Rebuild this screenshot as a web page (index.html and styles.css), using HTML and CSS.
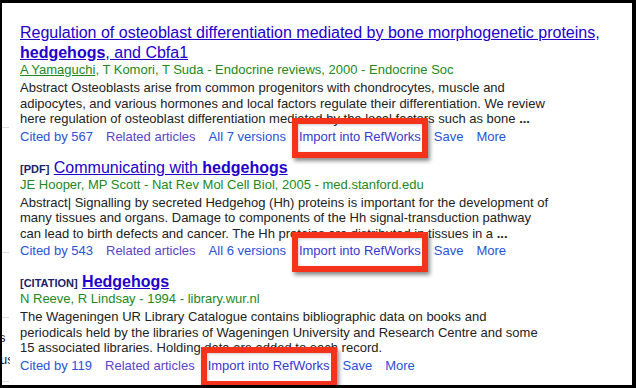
FILE: index.html
```html
<!DOCTYPE html>
<html lang="en">
<head>
    <meta charset="UTF-8">
    <title>Scholar results - hedgehogs</title>
    <link rel="stylesheet" href="styles.css">
</head>
<body>
    <div class="frame">
        <!-- cut-off left column -->
        <aside class="strip">
            <div class="rule rule-1"></div>
            <div class="rule rule-2"></div>
            <div class="rule rule-3"></div>
            <div class="stub stub-1">s</div>
            <div class="stub stub-2">us</div>
            <div class="rule rule-4"></div>
        </aside>

        <main class="results">
            <div class="result">
                <h3 class="title"><a href="#">Regulation of osteoblast differentiation mediated by bone morphogenetic proteins, <b>hedgehogs</b>, and Cbfa1</a></h3>
                <div class="meta"><a href="#">A Yamaguchi</a>, T Komori, T Suda - Endocrine reviews, 2000 - Endocrine Soc</div>
                <div class="snippet">Abstract Osteoblasts arise from common progenitors with chondrocytes, muscle and<br>adipocytes, and various hormones and local factors regulate their differentiation. We review<br>here regulation of osteoblast differentiation mediated by the local factors such as bone <b>...</b></div>
                <div class="links">
                    <a href="#">Cited by 567</a>
                    <a href="#" class="seen">Related articles</a>
                    <a href="#">All 7 versions</a>
                    <span class="marked"><a href="#">Import into RefWorks</a></span>
                    <a href="#">Save</a>
                    <a href="#">More</a>
                </div>
            </div>

            <div class="result">
                <h3 class="title"><span class="tag">[PDF]</span> <a href="#">Communicating with <b>hedgehogs</b></a></h3>
                <div class="meta">JE Hooper, MP Scott - Nat Rev Mol Cell Biol, 2005 - med.stanford.edu</div>
                <div class="snippet">Abstract| Signalling by secreted Hedgehog (Hh) proteins is important for the development of<br>many tissues and organs. Damage to components of the Hh signal-transduction pathway<br>can lead to birth defects and cancer. The Hh proteins are distributed in tissues in a <b>...</b></div>
                <div class="links">
                    <a href="#">Cited by 543</a>
                    <a href="#" class="seen">Related articles</a>
                    <a href="#">All 6 versions</a>
                    <span class="marked"><a href="#">Import into RefWorks</a></span>
                    <a href="#">Save</a>
                    <a href="#">More</a>
                </div>
            </div>

            <div class="result">
                <h3 class="title"><span class="tag">[CITATION]</span> <a href="#"><b>Hedgehogs</b></a></h3>
                <div class="meta">N Reeve, R Lindsay - 1994 - library.wur.nl</div>
                <div class="snippet">The Wageningen UR Library Catalogue contains bibliographic data on books and<br>periodicals held by the libraries of Wageningen University and Research Centre and some<br>15 associated libraries. Holding data are added to each record.</div>
                <div class="links">
                    <a href="#">Cited by 119</a>
                    <a href="#" class="seen">Related articles</a>
                    <span class="marked"><a href="#">Import into RefWorks</a></span>
                    <a href="#">Save</a>
                    <a href="#">More</a>
                </div>
            </div>
        </main>
    </div>
</body>
</html>
```

FILE: styles.css
```css
body {
    margin: 0;
    padding: 0;
    font-family: Arial, "Liberation Sans", sans-serif;
    background: #fff;
}
.frame {
    display: flex;
    box-sizing: border-box;
    height: 388px;
    border-style: solid;
    border-color: #000;
    border-width: 3px 4px 3px 2px;
    overflow: hidden;
}
.strip {
    width: 8px;
    flex: none;
    display: flex;
    flex-direction: column;
    overflow: hidden;
}
.rule {
    height: 1px;
    width: 7px;
    background: #ddd;
}
.rule-1 { margin-top: 124px; }
.rule-2 { margin-top: 124px; }
.rule-3 { margin-top: 64px; }
.rule-4 { margin-top: 13px; }
.stub {
    font-size: 13px;
    line-height: 16px;
    color: #222;
    white-space: nowrap;
}
.stub-1 { margin-top: 12px; text-indent: -3px; }
.stub-2 { margin-top: 6px; text-indent: -2px; }
.results {
    flex: 1;
    padding: 20px 0 0 10px;
}
.result {
    margin-bottom: 13px;
}
.title {
    margin: 0;
    font-size: 16px;
    line-height: 20px;
    font-weight: normal;
}
.title a {
    color: #2200cc;
}
.tag {
    font-size: 11px;
    line-height: 10px;
    font-weight: bold;
    color: #1c2266;
}
.meta {
    margin-top: -1px;
    font-size: 13px;
    line-height: 16px;
    color: #228822;
}
.meta a {
    color: #228822;
}
.snippet {
    margin-top: 2px;
    font-size: 13px;
    line-height: 15.5px;
    color: #222;
}
.links {
    margin-top: 2px;
    display: flex;
    gap: 13px;
    font-size: 13px;
    line-height: 16px;
}
.links a {
    color: #2a52d6;
    text-decoration: none;
}
.links a.seen {
    color: #5b44c8;
}
.marked {
    position: relative;
}
.marked a {
    color: #3838d0;
}
/* red annotation box drawn over the text */
.marked::after {
    content: "";
    position: absolute;
    top: -11px;
    bottom: -13px;
    left: -7px;
    right: -7px;
    border: 6px solid #f5331b;
    box-shadow: 2px 3px 4px rgba(0, 0, 0, 0.45), inset 1px 1px 3px rgba(0, 0, 0, 0.2);
}
```
